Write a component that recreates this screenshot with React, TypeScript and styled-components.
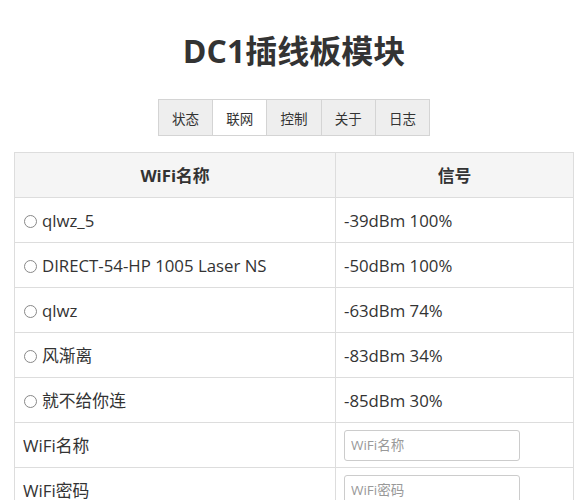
import styled, { createGlobalStyle } from "styled-components";

const GlobalStyle = createGlobalStyle`
  body {
    margin: 8px;
    background: #fff;
    color: #333;
    font-family: "Open Sans", "Noto Sans CJK SC", sans-serif;
  }
`;

const Page = styled.div`
  display: flex;
  flex-direction: column;
  align-items: center;
`;

const Title = styled.h1`
  font-size: 32px;
  font-weight: 700;
  color: #333;
  margin: 21px 0 0;
  line-height: 44px;
`;

const Tabs = styled.div`
  display: flex;
  margin-top: 26px;
  border: 1px solid #d4d4d4;
`;

const Tab = styled.div<{ $active?: boolean }>`
  width: 53.3px;
  height: 35px;
  display: flex;
  align-items: center;
  justify-content: center;
  font-size: 13.5px;
  color: #333;
  background: ${(p) => (p.$active ? "#fff" : "#eee")};
  & + & {
    border-left: 1px solid #d4d4d4;
  }
`;

const Table = styled.table`
  width: 560px;
  margin-top: 16px;
  border-collapse: collapse;
  font-size: 16.8px;
`;

const Th = styled.th`
  height: 44px;
  background: #f5f5f5;
  border: 1px solid #ddd;
  font-weight: 700;
  text-align: center;
  padding: 0 8px;
`;

const Td = styled.td`
  height: 44px;
  border: 1px solid #ddd;
  padding: 0 8px;
  vertical-align: middle;
`;

const Radio = styled.span`
  display: inline-block;
  width: 13px;
  height: 13px;
  border: 1px solid #888;
  border-radius: 50%;
  box-sizing: border-box;
  margin: 0 5px 0 1px;
  vertical-align: -1px;
`;

const Input = styled.input`
  width: 176px;
  height: 31px;
  box-sizing: border-box;
  border: 1px solid #ccc;
  border-radius: 3px;
  padding: 0 6px;
  font-family: inherit;
  font-size: 13.5px;
  color: #333;
  &::placeholder {
    color: #999;
  }
`;

const tabs = ["状态", "联网", "控制", "关于", "日志"];

const networks = [
  { name: "qlwz_5", signal: "-39dBm 100%" },
  { name: "DIRECT-54-HP 1005 Laser NS", signal: "-50dBm 100%" },
  { name: "qlwz", signal: "-63dBm 74%" },
  { name: "风渐离", signal: "-83dBm 34%" },
  { name: "就不给你连", signal: "-85dBm 30%" },
];

export default function App() {
  return (
    <Page>
      <GlobalStyle />
      <Title>DC1插线板模块</Title>
      <Tabs>
        {tabs.map((t) => (
          <Tab key={t} $active={t === "联网"}>
            {t}
          </Tab>
        ))}
      </Tabs>
      <Table>
        <thead>
          <tr>
            <Th style={{ width: "304px" }}>WiFi名称</Th>
            <Th>信号</Th>
          </tr>
        </thead>
        <tbody>
          {networks.map((n) => (
            <tr key={n.name}>
              <Td>
                <Radio />
                {n.name}
              </Td>
              <Td>{n.signal}</Td>
            </tr>
          ))}
          <tr>
            <Td>WiFi名称</Td>
            <Td>
              <Input placeholder="WiFi名称" />
            </Td>
          </tr>
          <tr>
            <Td>WiFi密码</Td>
            <Td>
              <Input placeholder="WiFi密码" />
            </Td>
          </tr>
        </tbody>
      </Table>
    </Page>
  );
}
